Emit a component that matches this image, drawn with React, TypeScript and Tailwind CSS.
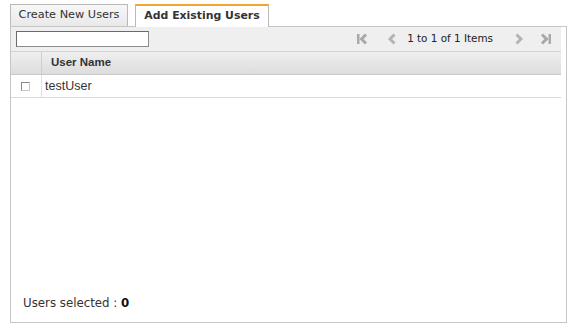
import React from "react";

const FirstIcon = () => (
  <svg width="11" height="12" viewBox="0 0 11 12" className="block">
    <rect x="0" y="1" width="2.5" height="10" fill="#a9a9a9" />
    <polyline points="9,1.5 4.5,6 9,10.5" fill="none" stroke="#a9a9a9" strokeWidth="3" />
  </svg>
);

const PrevIcon = () => (
  <svg width="8" height="12" viewBox="0 0 8 12" className="block">
    <polyline points="6.5,1.5 2,6 6.5,10.5" fill="none" stroke="#b4b4b4" strokeWidth="3" />
  </svg>
);

const NextIcon = () => (
  <svg width="8" height="12" viewBox="0 0 8 12" className="block">
    <polyline points="1.5,1.5 6,6 1.5,10.5" fill="none" stroke="#b4b4b4" strokeWidth="3" />
  </svg>
);

const LastIcon = () => (
  <svg width="11" height="12" viewBox="0 0 11 12" className="block">
    <polyline points="2,1.5 6.5,6 2,10.5" fill="none" stroke="#a9a9a9" strokeWidth="3" />
    <rect x="8.5" y="1" width="2.5" height="10" fill="#a9a9a9" />
  </svg>
);

const App = () => {
  return (
    <div className="w-[580px] h-[330px] bg-white pl-[10px] pt-[4px] font-['DejaVu_Sans',sans-serif] text-[#333]">
      {/* tabs */}
      <div className="flex items-end gap-[7px] h-[22px]">
        <div className="w-[118px] h-[22px] flex items-center justify-center border border-b-0 border-[#b9b9b9] bg-gradient-to-b from-[#f7f7f7] to-[#e9e9e9] text-[11.3px] text-[#333]">
          Create New Users
        </div>
        <div className="w-[134px] h-[23px] flex items-center justify-center border-x border-[#b9b9b9] border-t-2 border-t-[#f3a42c] bg-white text-[10.9px] font-bold text-[#333] relative top-[1px]">
          Add Existing Users
        </div>
      </div>

      {/* panel */}
      <div className="w-[557px] h-[297px] border border-[#c6c6c6] flex flex-col pr-[5px]">
        <div className="h-[25px] flex items-center bg-[#efefef] border-b border-[#d3d3d3] pl-[5px]">
          <input
            type="text"
            className="w-[133px] h-[16px] border border-[#8c8c8c] border-t-[#6a6a6a] border-l-[#6a6a6a] bg-white outline-none"
          />
          <div className="ml-auto flex items-center pr-[10px]">
            <FirstIcon />
            <div className="ml-[20px]">
              <PrevIcon />
            </div>
            <span className="ml-[11px] text-[10.4px] text-[#222]">1 to 1 of 1 Items</span>
            <div className="ml-[22px]">
              <NextIcon />
            </div>
            <div className="ml-[17px]">
              <LastIcon />
            </div>
          </div>
        </div>

        {/* header */}
        <div className="h-[23px] flex bg-gradient-to-b from-[#efefef] to-[#dddddd] border-b border-[#c9c9c9] font-['Liberation_Sans',Arial,sans-serif]">
          <div className="w-[31px] border-r border-[#cfcfcf]" />
          <div className="flex items-center pl-[9px] text-[11.5px] font-bold text-[#333]">User Name</div>
        </div>

        {/* row */}
        <div className="h-[23px] flex border-b border-[#d9d9d9] font-['Liberation_Sans',Arial,sans-serif]">
          <div className="w-[31px] border-r border-[#e2e2e2] flex items-center pl-[10px]">
            <div className="w-[9px] h-[9px] border border-[#8a8a8a] border-r-[#c8c8c8] border-b-[#c8c8c8] bg-white" />
          </div>
          <div className="flex items-center pl-[3px] text-[12.5px] text-[#333]">testUser</div>
        </div>

        <div className="flex-1" />

        {/* footer */}
        <div className="pl-[12px] pb-[9px] text-[11.8px] text-[#333]">
          Users selected : <span className="font-bold text-[#111]">0</span>
        </div>
      </div>
    </div>
  );
};

export default App;
